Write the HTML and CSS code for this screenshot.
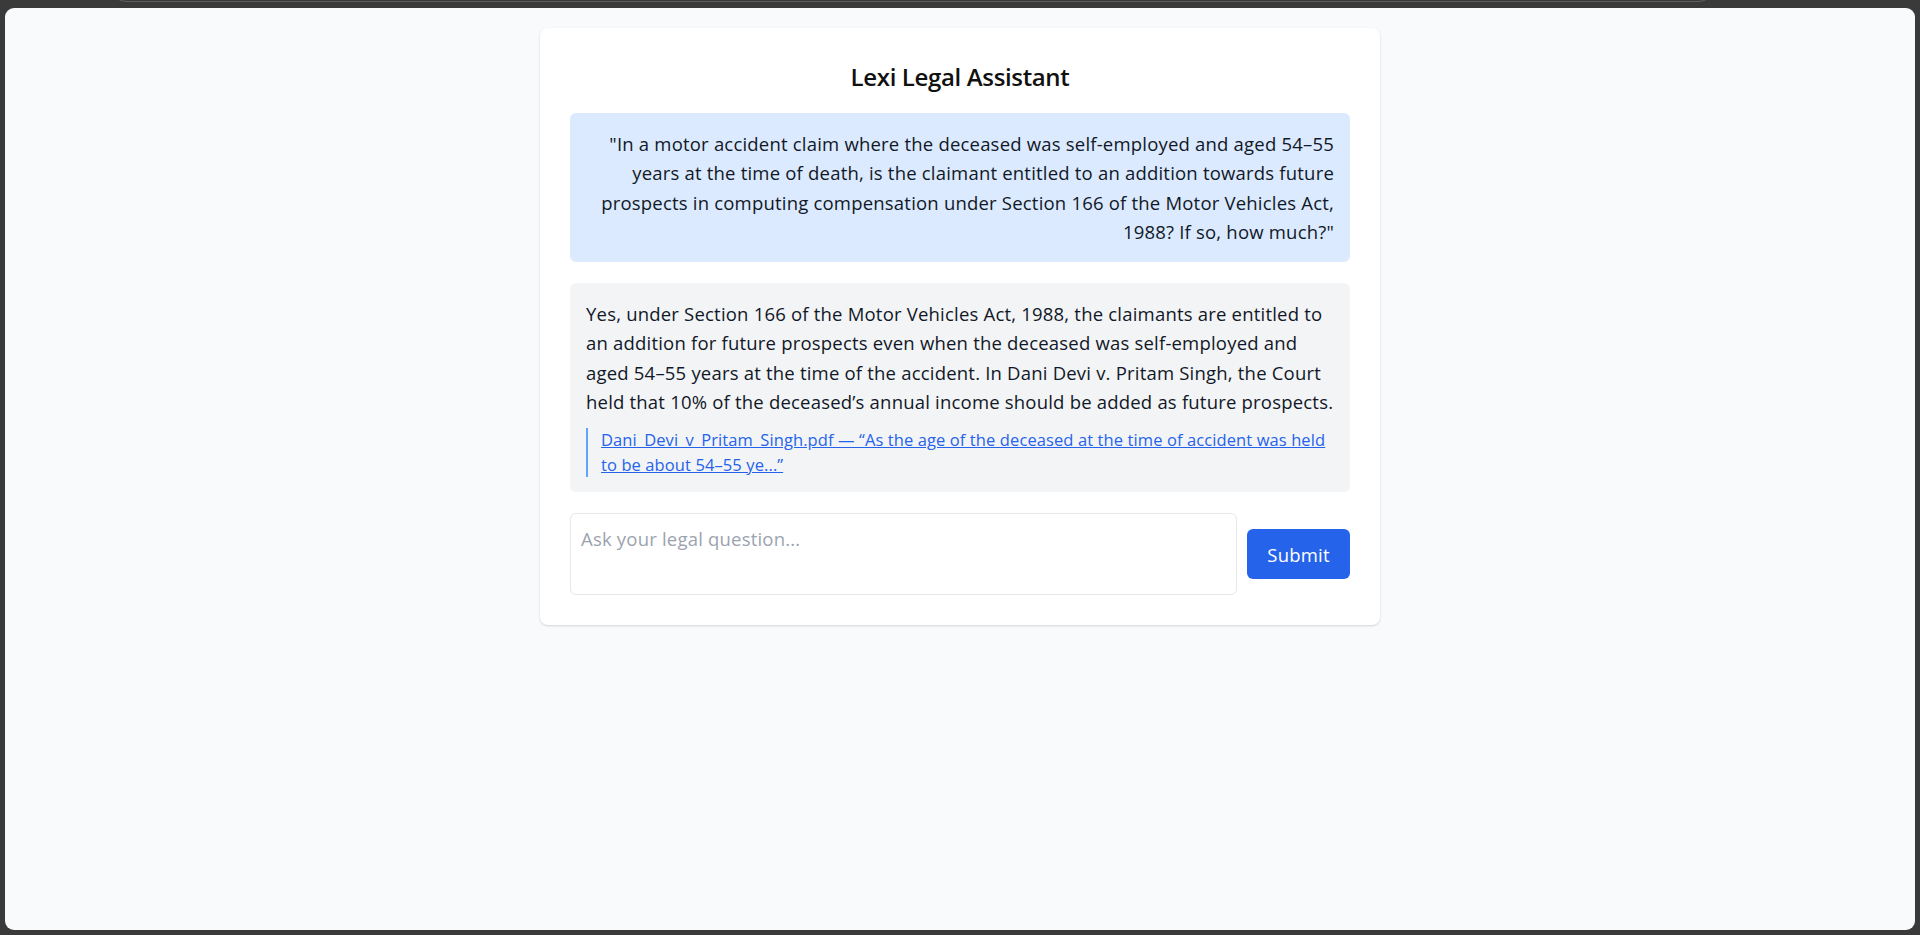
FILE: index.html
```html
<!DOCTYPE html>
<html lang="en">
<head>
<meta charset="utf-8">
<title>Lexi Legal Assistant</title>
<link rel="stylesheet" href="styles.css">
</head>
<body>
<div class="chrome"><div class="pill"></div></div>
<div class="viewport">
  <main class="card">
    <h1 class="title">Lexi Legal Assistant</h1>
    <div class="msg msg-user">"In a motor accident claim where the deceased was self-employed and aged 54–55 years at the time of death, is the claimant entitled to an addition towards future prospects in computing compensation under Section 166 of the Motor Vehicles Act, 1988? If so, how much?"</div>
    <div class="msg msg-bot">
      <p class="answer">Yes, under Section 166 of the Motor Vehicles Act, 1988, the claimants are entitled to an addition for future prospects even when the deceased was self-employed and aged 54–55 years at the time of the accident. In Dani Devi v. Pritam Singh, the Court held that 10% of the deceased’s annual income should be added as future prospects.</p>
      <div class="cite"><a href="#" class="cite-link">Dani_Devi_v_Pritam_Singh.pdf — “As the age of the deceased at the time of accident was held to be about 54–55 ye...”</a></div>
    </div>
    <form class="ask">
      <textarea class="ask-input" placeholder="Ask your legal question..."></textarea>
      <button type="button" class="ask-btn">Submit</button>
    </form>
  </main>
</div>
</body>
</html>
```

FILE: styles.css
```css
* { box-sizing: border-box; }
html, body { margin: 0; padding: 0; }
body {
  background: #3a3a3a;
  font-family: "Open Sans", "Liberation Sans", sans-serif;
  color: #111827;
  height: 935px;
  overflow: hidden;
}
.chrome {
  height: 8px;
  overflow: hidden;
  padding: 0 206px 0 111px;
}
.pill {
  height: 30px;
  margin-top: -28px;
  border: 1px solid #5e5e5e;
  border-radius: 15px;
}
.viewport {
  margin: 0 5px 5px 5px;
  height: 922px;
  background: #f9fafb;
  border-radius: 9px;
  padding-top: 20px;
}
.card {
  width: 840px;
  margin: 0 auto;
  background: #ffffff;
  border-radius: 8px;
  box-shadow: 0 1px 3px rgba(0,0,0,0.1), 0 1px 2px rgba(0,0,0,0.06);
  padding: 30px;
}
.title {
  margin: 0 0 20px 0;
  padding-top: 3px;
  text-align: center;
  font-size: 24px;
  letter-spacing: -0.35px;
  line-height: 32px;
  font-weight: 600;
  color: #111;
}
.msg {
  border-radius: 6px;
  padding: 16px;
  font-size: 18.5px;
  letter-spacing: 0.2px;
  line-height: 29.25px;
}
.msg-user {
  background: #dbeafe;
  text-align: right;
}
.msg-bot {
  background: #f3f4f6;
  margin-top: 21px;
  padding-bottom: 15px;
}
.answer { margin: 0; }
.cite {
  margin-top: 12px;
  border-left: 2px solid #60a5fa;
  padding-left: 13px;
  font-size: 16.5px;
  letter-spacing: 0.1px;
  line-height: 24.5px;
}
.cite-link {
  color: #2563eb;
  text-decoration: underline;
}
.ask {
  margin: 21px 0 0 0;
  display: flex;
  align-items: center;
  gap: 10px;
}
.ask-input {
  flex: 1;
  height: 82px;
  border: 1px solid #e5e7eb;
  border-radius: 6px;
  padding: 10px;
  font-family: inherit;
  font-size: 18.5px;
  letter-spacing: 0.2px;
  line-height: 29px;
  resize: none;
  color: #111827;
}
.ask-input::placeholder { color: #9ca3af; }
.ask-btn {
  width: 103px;
  height: 50px;
  background: #2563eb;
  color: #fff;
  border: none;
  border-radius: 6px;
  font-family: inherit;
  font-size: 18.5px;
  letter-spacing: 0.2px;
  padding: 0;
}
```
